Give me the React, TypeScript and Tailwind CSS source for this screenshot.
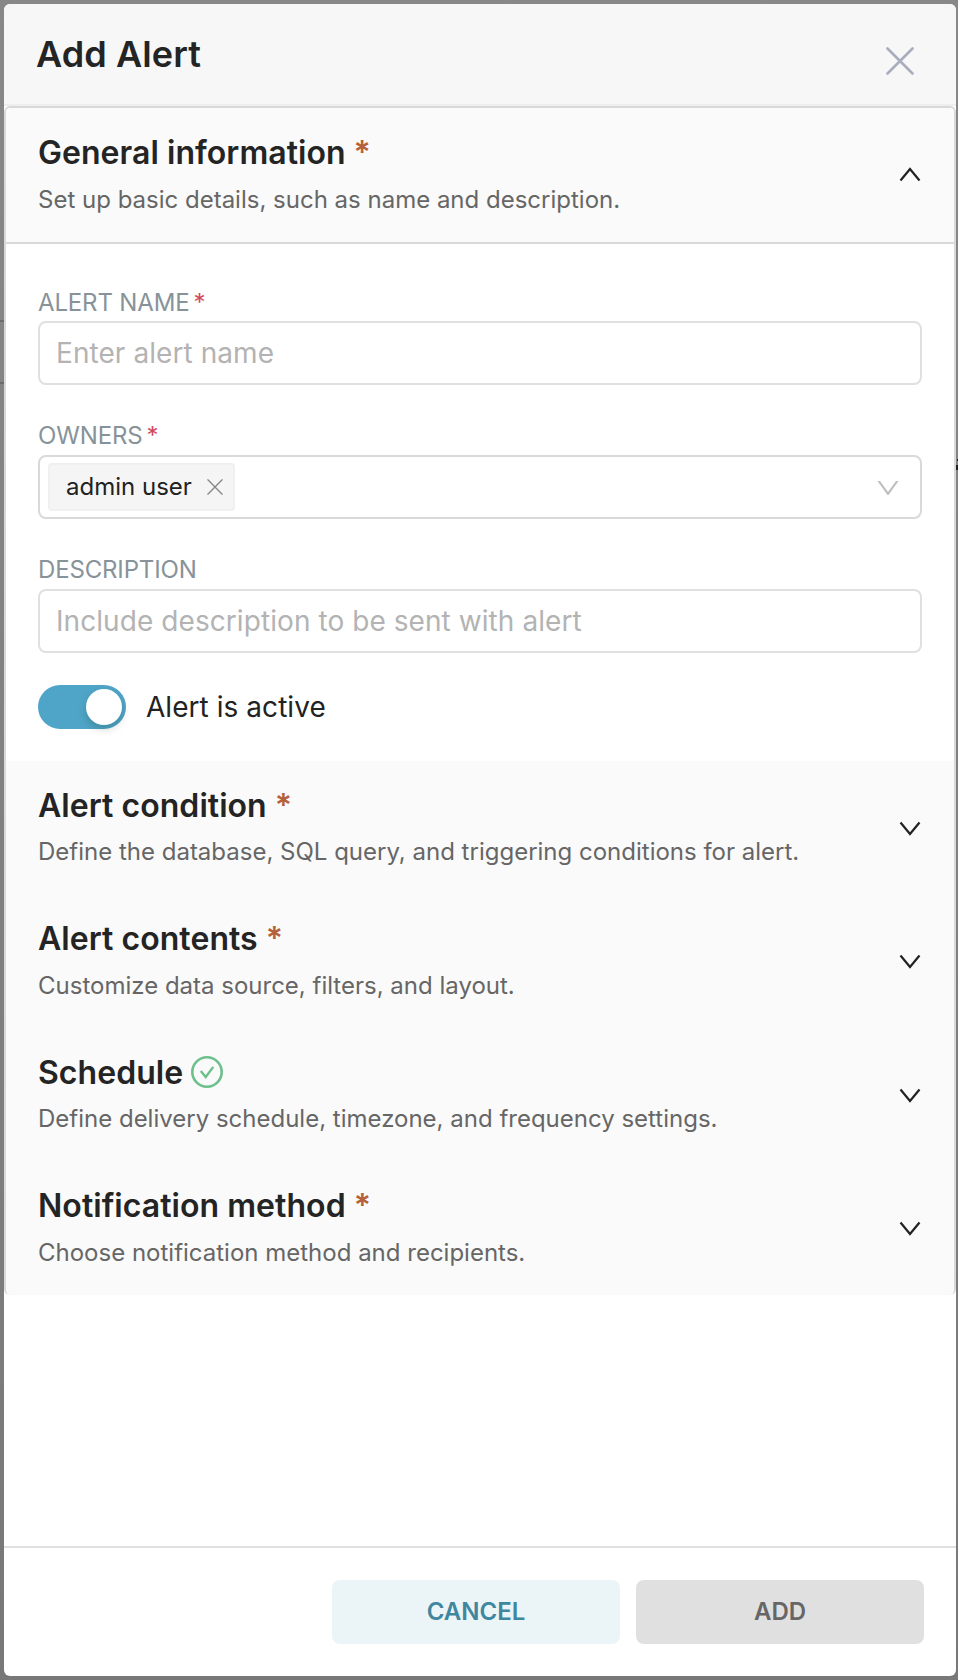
import { useState } from 'react';

type Status = 'required' | 'done';

function Arrow({ className = '' }: { className?: string }) {
  return (
    <svg viewBox="0 0 1024 1024" fill="currentColor" className={className} aria-hidden="true">
      <path d="M884 256h-75c-5.100 0-9.900 2.500-12.900 6.600L512 654.200 227.900 262.600c-3-4.100-7.800-6.600-12.900-6.600h-75c-6.500 0-10.300 7.400-6.500 12.700l352.600 486.100c12.800 17.600 39 17.600 51.700 0l352.600-486.100c3.900-5.300.1-12.700-6.400-12.700z" />
    </svg>
  );
}

function Chevron({ className = '' }: { className?: string }) {
  return (
    <svg viewBox="0 0 24 16" fill="none" stroke="currentColor" strokeWidth="2.200" className={className} aria-hidden="true">
      <path d="M2.500 1.500L12 13l9.500-11.500" />
    </svg>
  );
}

function Cross({ className = '', width }: { className?: string; width: number }) {
  return (
    <svg viewBox="0 0 28 28" fill="none" stroke="currentColor" strokeWidth={width} strokeLinecap="round" className={className} aria-hidden="true">
      <path d="M1.500 1.500l25 25M26.500 1.500l-25 25" />
    </svg>
  );
}

function CheckCircle() {
  return (
    <svg viewBox="0 0 32 32" fill="none" stroke="#6dbf8b" className="mb-[2px] ml-[8px] size-8" aria-hidden="true">
      <circle cx="16" cy="16" r="14.700" strokeWidth="2.600" />
      <path d="M9.800 15l4.900 6L22.300 10.900" strokeWidth="2.400" />
    </svg>
  );
}

function PanelHeader({ title, text, status, open = false }: { title: string; text: string; status: Status; open?: boolean }) {
  return (
    <div className="flex h-[133.5px] shrink-0 items-start justify-between bg-[#fafafa] px-8">
      <div className="pt-[25px]">
        <div className="flex h-10 items-center text-[32px] leading-10 font-semibold tracking-[0.05px] text-[#242424]">
          <h2>{title}</h2>
          {status === 'required' ? <span className="ml-[8px] text-[#b5623a]">*</span> : <CheckCircle />}
        </div>
        <p className="mt-[10.5px] text-2xl leading-8 whitespace-nowrap text-[#666666]">{text}</p>
      </div>
      <Chevron className={open ? 'mt-[58px] h-4 w-6 rotate-180 text-[#222]' : 'mt-[60px] h-4 w-6 text-[#222]'} />
    </div>
  );
}

function Label({ children, required = false }: { children: string; required?: boolean }) {
  return (
    <div className="flex h-8 items-center text-2xl leading-8 tracking-[-0.15px] text-[#879399]">
      {children}
      {required && <span className="ml-1 text-[#d14a5b]">*</span>}
    </div>
  );
}

function TextField({ placeholder }: { placeholder: string }) {
  return (
    <input
      placeholder={placeholder}
      className="block h-16 w-full rounded-lg border-2 border-[#e0e0e0] bg-white px-4 text-[28px] tracking-[0.07px] outline-none placeholder:text-[#b3b3b3]"
    />
  );
}

export default function App() {
  const [active, setActive] = useState(true);
  return (
    <div className="relative h-[1680px] w-[958px] overflow-hidden bg-linear-to-b from-[#888888] via-[#82807f] to-[#797879] py-1 pr-[2px] pl-1 font-['Inter',sans-serif]">
      <div className="absolute top-[320px] left-0 h-[2px] w-1 bg-[#6d6c6b]" />
      <div className="absolute top-[382px] left-0 h-[2px] w-1 bg-[#6d6c6b]" />
      <div className="absolute top-[459px] right-0 h-[2px] w-px bg-[#222]" />
      <div className="absolute top-[465px] right-0 h-[5px] w-[2px] bg-[#222]" />
      <main className="flex h-[1672px] flex-col overflow-hidden rounded-[6px] bg-white">
        <header className="flex h-[102px] shrink-0 items-start justify-between border-b-2 border-[#eeeeee] bg-[#f7f7f7] pr-[42px] pl-8">
          <h1 className="mt-[26px] text-4xl leading-[48px] font-semibold tracking-[0.1px] text-[#242424]">Add Alert</h1>
          <button aria-label="Close" className="mt-[42.5px] text-[#a9adbe]">
            <Cross className="size-7" width={2.6} />
          </button>
        </header>
        <div className="flex flex-col overflow-hidden rounded-[6px] border-x-2 border-t-2 border-[#d9d9d9]">
          <PanelHeader title="General information" text="Set up basic details, such as name and description." status="required" open />
          <section className="h-[519px] border-t-2 border-[#d9d9d9] bg-white px-8 pt-[43px]">
            <Label required>ALERT NAME</Label>
            <div className="pt-[2px]">
              <TextField placeholder="Enter alert name" />
            </div>
            <div className="mt-[35px]">
              <Label required>OWNERS</Label>
              <div className="mt-[3px] flex h-16 items-center justify-between rounded-lg border-2 border-[#d9d9d9] pr-[18px] pl-2">
                <div className="flex h-12 items-center rounded border-2 border-[#f0f0f0] bg-[#f5f5f5] pr-[10px] pl-4">
                  <span className="text-2xl text-[#222]">admin user</span>
                  <Cross className="ml-[15px] size-4 text-[#888888]" width={2.4} />
                </div>
                <Arrow className="mt-[2px] size-7 text-[#bfbfbf]" />
              </div>
            </div>
            <div className="mt-[35px]">
              <Label>DESCRIPTION</Label>
              <div className="pt-[3px]">
                <TextField placeholder="Include description to be sent with alert" />
              </div>
            </div>
            <div className="mt-8 flex h-11 items-center">
              <button
                role="switch"
                aria-checked={active}
                aria-label="Alert is active"
                onClick={() => setActive(!active)}
                className={active ? 'flex h-11 w-[88px] items-center justify-end rounded-full bg-[#4fa5c8] p-1' : 'flex h-11 w-[88px] items-center justify-start rounded-full bg-[#bfbfbf] p-1'}
              >
                <span className="size-9 rounded-full bg-white shadow-[0_4px_8px_rgba(0,35,11,0.2)]" />
              </button>
              <span className="ml-5 text-[28px] tracking-[0.05px] text-[#222]">Alert is active</span>
            </div>
          </section>
          <PanelHeader title="Alert condition" text="Define the database, SQL query, and triggering conditions for alert." status="required" />
          <PanelHeader title="Alert contents" text="Customize data source, filters, and layout." status="required" />
          <PanelHeader title="Schedule" text="Define delivery schedule, timezone, and frequency settings." status="done" />
          <PanelHeader title="Notification method" text="Choose notification method and recipients." status="required" />
        </div>
        <footer className="mt-auto flex h-[130px] shrink-0 justify-end gap-4 border-t-2 border-[#e0e0e0] pt-8 pr-8 text-2xl font-semibold">
          <button className="h-16 w-[288px] rounded-lg bg-[#ebf4f7] text-[#3f869f]">CANCEL</button>
          <button className="h-16 w-[288px] rounded-lg bg-[#e0e0e0] text-[#666666]">ADD</button>
        </footer>
      </main>
    </div>
  );
}
